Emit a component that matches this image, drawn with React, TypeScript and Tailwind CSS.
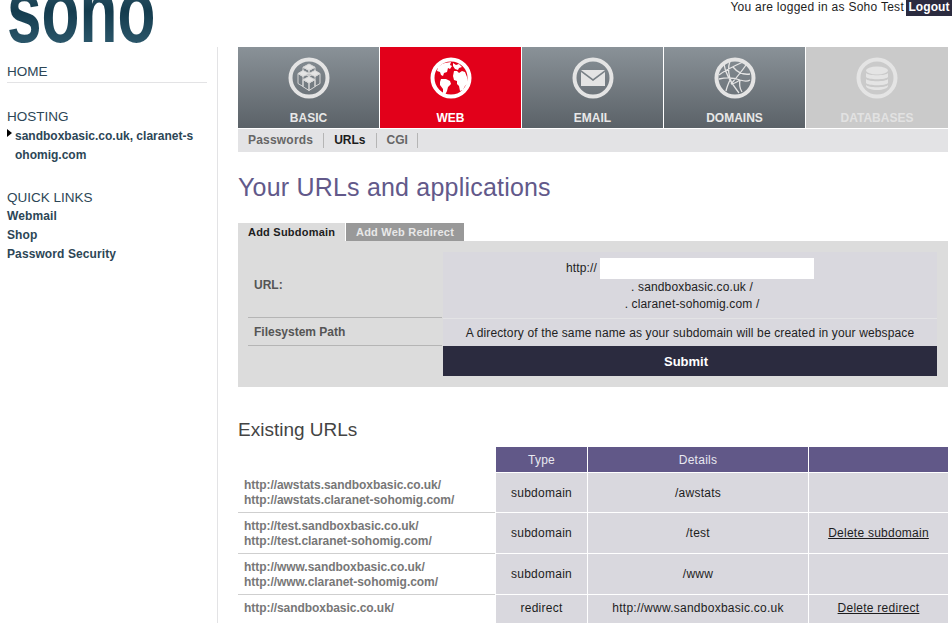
import type { ReactNode } from "react";

const font = "font-['Liberation_Sans',Arial,sans-serif]";

function Ring({ children, color = "#e4e4e4" }: { children: ReactNode; color?: string }) {
  return (
    <svg width="42" height="42" viewBox="0 0 42 42" fill="none">
      <circle cx="21" cy="21" r="18.5" stroke={color} strokeWidth="4" />
      {children}
    </svg>
  );
}

const cubes = (
  <g stroke="#d8d8d8" strokeWidth="1" fill="none" strokeLinejoin="round">
    <path d="M21 7l6 3.2-6 3.2-6-3.2z" fill="#e4e4e4" />
    <path d="M15 10.2v6l6 3.2v-6zM27 10.2v6l-6 3.2v-6z" />
    <path d="M15 13.5l-5 3 5 3 6-3z" fill="#e4e4e4" />
    <path d="M27 13.5l5 3-5 3-6-3z" fill="#e4e4e4" />
    <path d="M10 16.5v10l5 3v-10zM32 16.5v10l-5 3v-10z" />
    <path d="M21 19.5l6 3.2-6 3.2-6-3.2z" fill="#e4e4e4" />
    <path d="M15 22.7v7l6 3.8v-7.600zM27 22.7v7l-6 3.800v-7.600z" />
  </g>
);

const globe = (
  <g fill="#fff">
    <path d="M15 6l6-1-1 3 2 1-2 3-2-1-1 4-3 1-1 3-2-1-1-3-3-1 1-4 4-3z" />
    <path d="M11 22l5 0 4 2 1 3-3 3-1 4-2 4-2-1 0-5-3-4 0-3z" />
    <path d="M24 14l3 0 2 2 3-2 3 1 2 5 1 6-3 3-2 4-3 1-1-5-2-2 0-3-3-1-1-4z" />
    <path d="M23 6l3 2 3-1 3 3-3 1-1 2-3-1-2-3z" />
  </g>
);

const mail = (
  <g>
    <path d="M9 13h24l-12 9z" fill="#e4e4e4" />
    <path d="M9 15l12 9 12-9v14H9z" fill="#e4e4e4" />
  </g>
);

const network = (
  <g stroke="#e4e4e4" strokeWidth="1.3" fill="none">
    <path d="M5 18c8-6 15-9 24-13M10 7c1 9 6 17 15 29M16 4c-3 8-1 16 2 23M5 22c8-2 16-1 21 1M32 8c-4 6-9 12-15 19M26 23c3 1 7 2 10 0M36 17c-6 1-12-1-17-7M12 34c1-5 3-9 5-13M26 23c-1 5 0 9 2 12M17 27c3 0 6-2 9-4" />
  </g>
);

const database = (
  <g fill="#e4e4e4">
    <ellipse cx="21" cy="13.5" rx="11" ry="4" />
    <path d="M10 16c2 3 20 3 22 0v4c-2 3-20 3-22 0z" />
    <path d="M10 22c2 3 20 3 22 0v4c-2 3-20 3-22 0z" />
    <path d="M10 28c2 3 20 3 22 0v1c0 2-5 4-11 4s-11-2-11-4z" />
  </g>
);

const sections = [
  { label: "BASIC", icon: cubes, tone: "grey", width: "w-[141px]" },
  { label: "WEB", icon: globe, tone: "red", width: "w-[141px]" },
  { label: "EMAIL", icon: mail, tone: "grey", width: "w-[141px]" },
  { label: "DOMAINS", icon: network, tone: "grey", width: "w-[141px]" },
  { label: "DATABASES", icon: database, tone: "off", width: "w-[142px]" },
];

const rows = [
  {
    urls: ["http://awstats.sandboxbasic.co.uk/", "http://awstats.claranet-sohomig.com/"],
    type: "subdomain",
    details: "/awstats",
    action: "",
    height: "h-[39px]",
  },
  {
    urls: ["http://test.sandboxbasic.co.uk/", "http://test.claranet-sohomig.com/"],
    type: "subdomain",
    details: "/test",
    action: "Delete subdomain",
    height: "h-[40px]",
  },
  {
    urls: ["http://www.sandboxbasic.co.uk/", "http://www.claranet-sohomig.com/"],
    type: "subdomain",
    details: "/www",
    action: "",
    height: "h-[40px]",
  },
  {
    urls: ["http://sandboxbasic.co.uk/"],
    type: "redirect",
    details: "http://www.sandboxbasic.co.uk",
    action: "Delete redirect",
    height: "h-[28px]",
  },
];

function Sidebar() {
  return (
    <aside className="w-[218px] shrink-0 border-r border-[#e3e3e5] h-[576px] pl-[7px] pr-[10px] text-[#2c4656]">
      <div className="h-[36px] pt-[17px] border-b border-[#e3e3e5] text-[13.5px] leading-[16px]">HOME</div>
      <div className="mt-[26px] text-[13.5px] leading-[16px]">HOSTING</div>
      <div className="relative mt-[2px] w-[190px] pl-[8px] text-[12px] leading-[19px] font-bold break-all">
        <span className="absolute left-0 top-[2px] border-y-[4px] border-l-[5px] border-y-transparent border-l-black" />
        sandboxbasic.co.uk, claranet-sohomig.com
      </div>
      <div className="mt-[25px] text-[13.5px] leading-[16px]">QUICK LINKS</div>
      <ul className="mt-[1px] text-[12px] leading-[19px] font-bold tracking-[0.1px]">
        <li>Webmail</li>
        <li>Shop</li>
        <li>Password Security</li>
      </ul>
    </aside>
  );
}

function SectionTabs() {
  return (
    <nav className="flex gap-px">
      {sections.map((s) => (
        <div
          key={s.label}
          className={`${s.width} h-[81px] flex flex-col items-center pt-[10px] ${
            s.tone === "red"
              ? "bg-[#e2001a] text-white"
              : s.tone === "off"
                ? "bg-[#cacaca] text-[#e2e2e2]"
                : "bg-linear-to-b from-[#8a9298] to-[#5b6268] text-[#e8e8e8]"
          }`}
        >
          {s.tone === "red" ? <Ring color="#fff">{s.icon}</Ring> : <Ring>{s.icon}</Ring>}
          <span className="mt-[12px] text-[12px] leading-[14px] font-bold">{s.label}</span>
        </div>
      ))}
    </nav>
  );
}

function SubNav() {
  return (
    <div className="mt-px h-[23px] bg-[#e3e3e5] pl-[10px] flex items-center text-[12px] font-bold text-[#666]">
      <span className="pr-[10px] border-r border-[#b5b5b5] leading-[15px] tracking-[0.2px]">Passwords</span>
      <span className="px-[10px] border-r border-[#b5b5b5] leading-[15px] text-[#1d1d1d]">URLs</span>
      <span className="pl-[10px] pr-[9px] border-r border-[#b5b5b5] leading-[15px]">CGI</span>
    </div>
  );
}

function SubdomainForm() {
  return (
    <>
      <div className="mt-[21px] flex text-[11px] font-bold leading-[18px] tracking-[0.22px]">
        <div className="w-[107px] bg-[#dcdcdc] pl-[10px] text-[#1d1d1d]">Add Subdomain</div>
        <div className="ml-px w-[118px] bg-[#999] text-center text-[#e8e8e8]">Add Web Redirect</div>
      </div>
      <div className="bg-[#dcdcdc] h-[146px] pt-[11px] pl-[10px] pr-[11px]">
        <div className="flex h-[66px]">
          <div className="w-[194px] mr-px border-b border-[#b5b5b5] flex items-center pl-[6px] text-[12px] font-bold text-[#555]">
            URL:
          </div>
          <div className="flex-1 bg-[#d9d8de] text-[12px] leading-[17px] tracking-[0.14px] text-[#222] pt-[6px] text-center">
            <div className="flex items-center justify-center gap-[3px] h-[21px]">
              <span>http://</span>
              <input className="block w-[214px] h-[21px] bg-white" />
            </div>
            <div className="pl-[4px]">. sandboxbasic.co.uk /</div>
            <div className="pl-[4px]">. claranet-sohomig.com /</div>
          </div>
        </div>
        <div className="flex h-[28px]">
          <div className="w-[194px] mr-px border-b border-[#b5b5b5] flex items-center pl-[6px] text-[12px] font-bold text-[#555]">
            Filesystem Path
          </div>
          <div className="flex-1 bg-[#d9d8de] flex items-center justify-center border-t border-[#e3e3e5] text-[12px] tracking-[0.14px] text-[#222]">
            A directory of the same name as your subdomain will be created in your webspace
          </div>
        </div>
        <div className="flex h-[30px]">
          <div className="w-[195px]" />
          <div className="flex-1 bg-[#2b2b3f] pr-[8px] pt-[1px] flex items-center justify-center text-[13px] font-bold text-white">
            Submit
          </div>
        </div>
      </div>
    </>
  );
}

function UrlTable() {
  return (
    <div className="mt-[7px] text-[12px] tracking-[0.25px]">
      <div className="flex h-[25px] gap-px pl-[258px] text-center text-[#e8e8f0]">
        <div className="w-[91px] bg-[#615888] flex items-center justify-center">Type</div>
        <div className="w-[220px] bg-[#615888] flex items-center justify-center">Details</div>
        <div className="w-[139px] bg-[#615888]" />
      </div>
      {rows.map((row, i) => {
        const last = i === rows.length - 1;
        return (
          <div key={i} className={`flex ${row.height} mt-px gap-px text-center text-[#1d1d1d]`}>
            <div
              className={`w-[257px] text-left pl-[6px] font-bold tracking-[-0.05px] text-[#777] leading-[15px] flex flex-col justify-center ${
                last ? "pb-[2px]" : "pt-[1px] shadow-[0_1px_0_#cfcfcf]"
              }`}
            >
              {row.urls.map((u) => (
                <div key={u}>{u}</div>
              ))}
            </div>
            <div className={`w-[91px] bg-[#d9d8de] flex items-center justify-center ${last ? "pb-[2px]" : ""}`}>{row.type}</div>
            <div className={`w-[220px] bg-[#d9d8de] flex items-center justify-center ${last ? "pb-[2px]" : ""}`}>{row.details}</div>
            <div className={`w-[139px] bg-[#d9d8de] flex items-center justify-center underline ${last ? "pb-[2px]" : ""}`}>{row.action}</div>
          </div>
        );
      })}
    </div>
  );
}

export default function App() {
  return (
    <div className={`${font} w-[952px] h-[623px] overflow-hidden bg-white`}>
      <header className="h-[47px] flex justify-between overflow-hidden">
        <div className="pl-[7px] -mt-[26px] h-[73px]">
          <span className="block origin-left scale-x-[0.69] text-[90px] leading-[74px] font-bold bg-linear-to-b from-[#3a6274] via-[#143c4e] to-[#2e5a6e] bg-clip-text text-transparent">
            soho
          </span>
        </div>
        <div className="flex items-start text-[12px] leading-[15px] tracking-[0.27px] text-[#1d1d1d]">
          <span className="pr-[2px]">You are logged in as Soho Test</span>
          <span className="w-[46px] h-[16px] bg-[#2b2b3f] text-white font-bold text-center tracking-[0.1px]">Logout</span>
        </div>
      </header>
      <div className="flex">
        <Sidebar />
        <main className="ml-[20px] w-[710px]">
          <SectionTabs />
          <SubNav />
          <h1 className="mt-[20px] text-[25px] leading-[30px] tracking-[0.2px] text-[#62598a]">Your URLs and applications</h1>
          <SubdomainForm />
          <h2 className="mt-[32px] text-[19px] leading-[21px] text-[#444]">Existing URLs</h2>
          <UrlTable />
        </main>
      </div>
    </div>
  );
}
